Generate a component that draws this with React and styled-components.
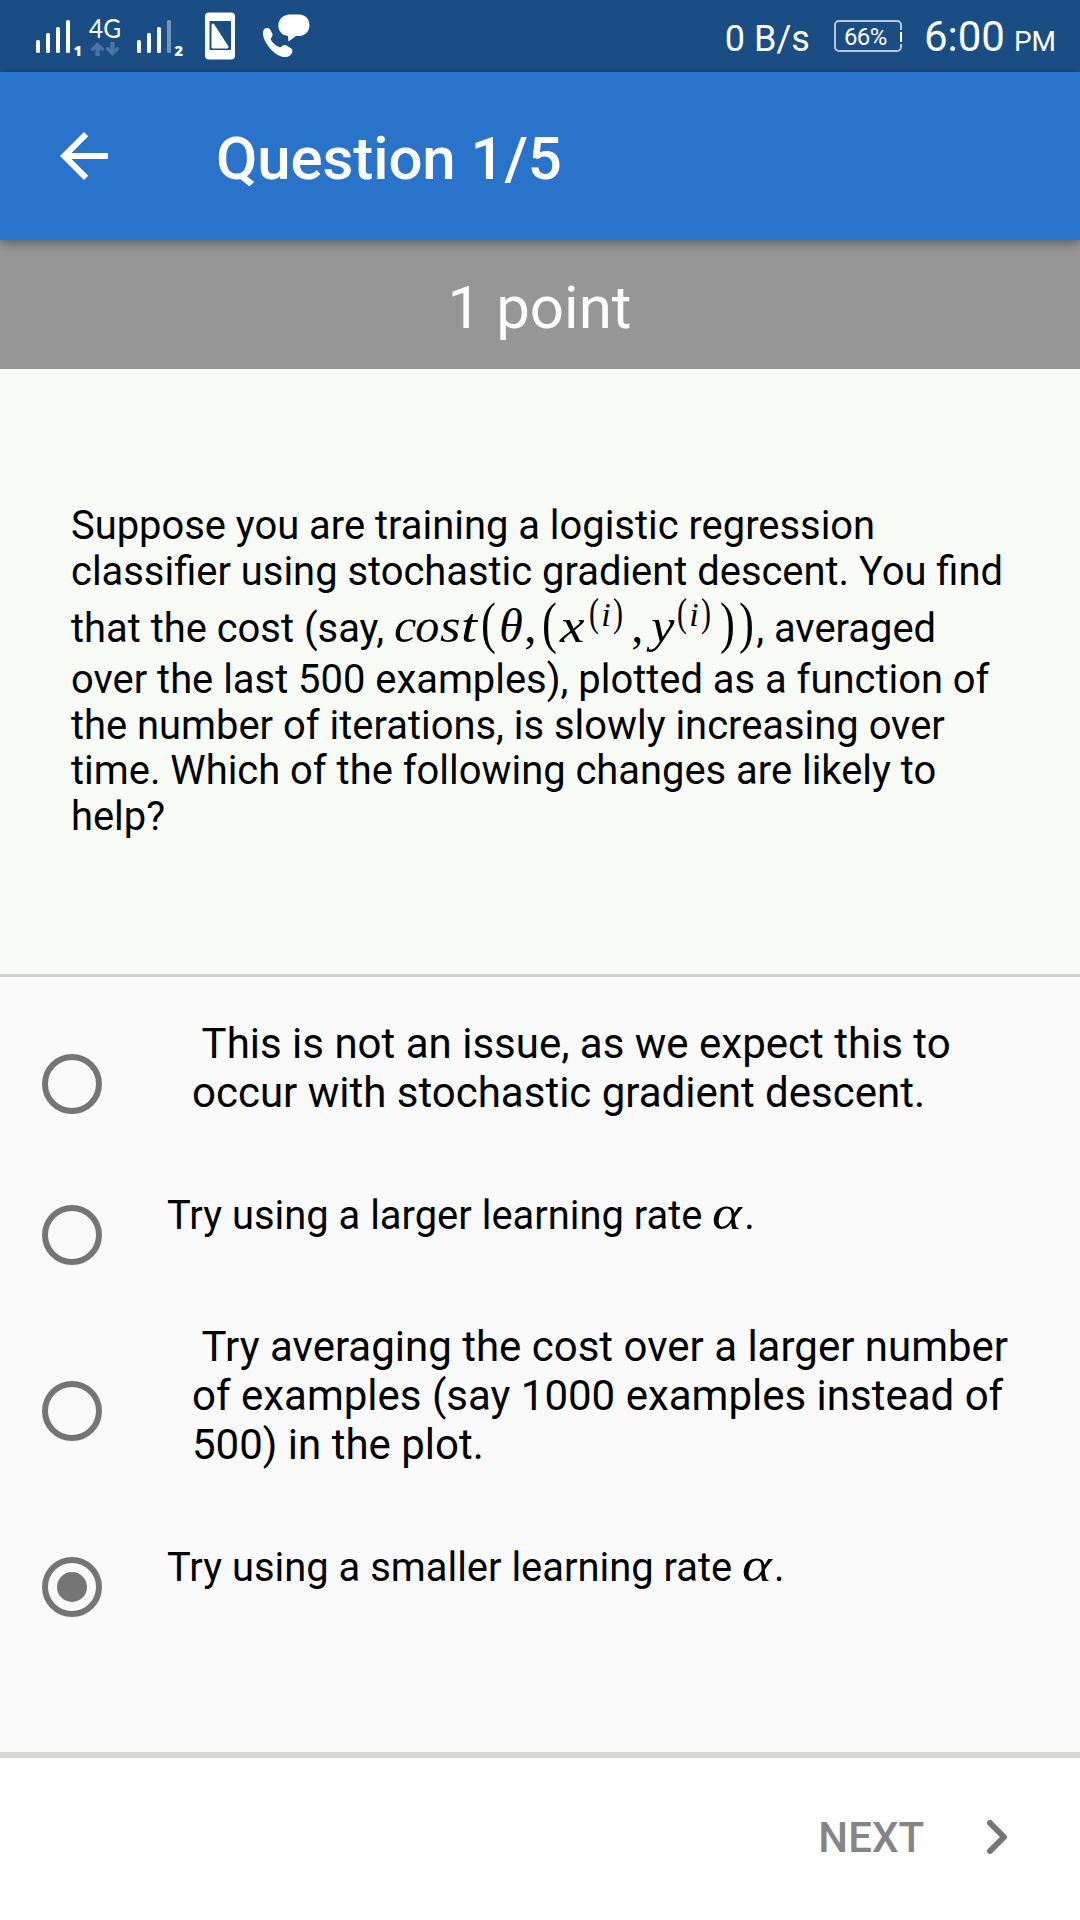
import React from "react";
import styled, { createGlobalStyle } from "styled-components";

const GlobalStyle = createGlobalStyle`
  * { box-sizing: border-box; }
  body { margin: 0; background: #fafafa; font-family: Roboto, "Noto Sans", sans-serif; }
`;

const Screen = styled.div`
  width: 1080px;
  height: 1920px;
  display: flex;
  flex-direction: column;
  overflow: hidden;
  background: #fafafa;
  color: #000;
`;

const StatusBar = styled.header`
  height: 72px;
  flex: none;
  display: flex;
  justify-content: space-between;
  padding: 0 24px 0 30px;
  background: #1b4d85;
  color: #fff;
`;

const StatusIcons = styled.svg`
  width: 290px;
  height: 72px;
  display: block;
`;

const StatusInfo = styled.div`
  display: flex;
  align-items: baseline;
  white-space: nowrap;
  line-height: 74px;
`;

const Speed = styled.span`
  font-size: 36px;
  margin-right: 24px;
`;

const Battery = styled.span`
  position: relative;
  align-self: flex-start;
  width: 68px;
  height: 32px;
  margin: 20px 22px 0 0;
  border: 2px solid #b5c6da;
  border-radius: 5px;
  font-size: 24px;
  line-height: 30px;
  padding-left: 8px;
  letter-spacing: -0.6px;

  &::after {
    content: "";
    position: absolute;
    right: -2px;
    top: 10px;
    width: 2px;
    height: 10px;
    background: #fff;
    box-shadow: 0 -2px 0 #1b4d85, 0 2px 0 #1b4d85;
  }
`;

const Clock = styled.span`
  font-size: 42px;
`;

const Meridiem = styled.span`
  font-size: 28px;
  margin-left: 9px;
`;

const AppBar = styled.div`
  position: relative;
  z-index: 1;
  height: 168px;
  flex: none;
  display: flex;
  align-items: center;
  padding-left: 48px;
  background: #2a73cb;
  color: #fff;
  box-shadow: 0 3px 10px rgba(0, 0, 0, 0.38);
`;

const BackIcon = styled.svg`
  width: 72px;
  height: 72px;
  fill: #fff;
`;

const Title = styled.h1`
  margin: 5px 0 0 96px;
  font-size: 60px;
  font-weight: 500;
  line-height: 70px;
  letter-spacing: -0.1px;
`;

const Points = styled.div`
  height: 129px;
  flex: none;
  padding-right: 1px;
  background: #969696;
  color: #fff;
  text-align: center;
  font-size: 60px;
  line-height: 135px;
`;

const Question = styled.section`
  height: 608px;
  flex: none;
  padding: 134px 0 0 71px;
  background: #f9fbf6;
  border-bottom: 3px solid #d0d4d1;
  font-size: 39.9px;
`;

const Line = styled.div`
  height: ${(p) => (p.$math ? 62.6 : 45.7)}px;
  padding-top: ${(p) => (p.$math ? 7 : 0)}px;
  line-height: 45.7px;
  white-space: nowrap;
`;

const Formula = styled.span`
  display: inline-flex;
  align-items: baseline;
  height: 45px;
  margin: 0 2px 0 10px;
  font-family: "Liberation Serif", serif;
`;

const Glyph = styled.span`
  flex: none;
  width: ${(p) => p.$w}px;
  font-size: ${(p) => p.$size || 48}px;
  font-style: ${(p) => (p.$upright ? "normal" : "italic")};
  line-height: 45.7px;
  transform: scaleX(${(p) => p.$stretch || 1});
  transform-origin: left;
`;

const Sup = styled(Glyph)`
  position: relative;
  top: -16px;
`;

const Answers = styled.section`
  height: 775px;
  flex: none;
  padding-top: 32px;
`;

const Option = styled.label`
  display: flex;
  height: ${(p) => p.$height}px;
  padding-left: 42px;
`;

const Radio = styled.span`
  flex: none;
  display: grid;
  place-items: center;
  width: 60px;
  height: 60px;
  margin-top: ${(p) => p.$top}px;
  border: 6px solid #757575;
  border-radius: 50%;
`;

const Dot = styled.span`
  width: 30px;
  height: 30px;
  border-radius: 50%;
  background: #757575;
`;

const OptionText = styled.span`
  margin: ${(p) => p.$top}px 0 0 ${(p) => (p.$rich ? 65 : 90)}px;
  font-size: ${(p) => (p.$rich ? 39.9 : 42)}px;
  line-height: 49px;
  white-space: pre;
`;

const Alpha = styled.span`
  display: inline-block;
  width: 32px;
  font-family: "Liberation Serif", serif;
  font-style: italic;
  font-size: 48px;
  line-height: 40px;
  transform: scaleX(1.18);
  transform-origin: left;
`;

const Footer = styled.footer`
  flex: 1;
  display: flex;
  justify-content: flex-end;
  align-items: center;
  padding: 0 72px 4px 0;
  border-top: 6px solid #d6d7d4;
  background: #fff;
`;

const NextButton = styled.button`
  display: flex;
  align-items: center;
  gap: 62px;
  padding: 0;
  border: 0;
  background: none;
  color: #858585;
  font: 500 42px/50px Roboto, sans-serif;
`;

const NextLabel = styled.span`
  padding-top: 2px;
`;

const Chevron = styled.svg`
  width: 22px;
  height: 36px;
  fill: none;
  stroke: #757575;
  stroke-width: 6;
  stroke-linecap: round;
  stroke-linejoin: round;
`;

function Status() {
  return (
    <StatusBar>
      <StatusIcons viewBox="30 0 290 72" fill="#fff">
        <rect x="36" y="40" width="4" height="13" rx="1.5" />
        <rect x="46" y="33" width="4" height="20" rx="1.5" />
        <rect x="56" y="27" width="4" height="26" rx="1.5" />
        <rect x="66" y="20" width="4" height="33" rx="1.5" />
        <text x="73.500" y="56" fontSize="14.500" fontWeight="800" fontFamily="Open Sans">1</text>
        <text x="89" y="38" fontSize="27.500" fontFamily="Lato" textLength="32" lengthAdjust="spacingAndGlyphs">4G</text>
        <g fill="#4a74a3">
          <path d="M97.500 42l7 7-2 2.500-2.800-2.500v7h-4.400v-7l-2.800 2.500-2-2.500z" />
          <path d="M112.500 56l7-7-2-2.500-2.800 2.500v-7h-4.400v7l-2.800-2.500-2 2.500z" />
        </g>
        <rect x="137" y="40" width="4" height="13" rx="1.5" />
        <rect x="147" y="33" width="4" height="20" rx="1.5" />
        <rect x="157" y="27" width="4" height="26" rx="1.5" />
        <rect x="167" y="20" width="4" height="33" rx="1.5" fill="#7695ba" />
        <text x="174.500" y="56" fontSize="14.500" fontWeight="800" fontFamily="Open Sans">2</text>
        <rect x="205" y="12.500" width="30" height="47" rx="4" />
        <path fill="#1b4d85" d="M209.500 21h21.500v29h-21.500z" />
        <path stroke="#fff" strokeWidth="3" strokeLinejoin="round" d="M213 25L227 47H213z" />
        <path d="M264 29.500C266 27.500 269 27.500 270.500 30L272.500 34C273 36 271 37.500 270.700 39.500C272.500 43 276 46 280 47.500C282 46.500 283 44.500 285.500 45L290.500 48C293 49.500 293 52 291 54.500C286 60 277 56 271 49.500C266 44 260.500 34 264 29.500z" />
        <path d="M289 14.500h10c14 0 14 21.500 0 21.500h-3l-7.500 5.500-.5-5.500c-13-1-13-20.500 1-21.500z" />
      </StatusIcons>
      <StatusInfo>
        <Speed>0 B/s</Speed>
        <Battery>66%</Battery>
        <Clock>6:00</Clock>
        <Meridiem>PM</Meridiem>
      </StatusInfo>
    </StatusBar>
  );
}

function CostFormula() {
  return (
    <Formula>
      <Glyph $w={21} $stretch={1.05}>c</Glyph>
      <Glyph $w={25}>o</Glyph>
      <Glyph $w={21} $stretch={1.1}>s</Glyph>
      <Glyph $w={20} $stretch={1.2}>t</Glyph>
      <Glyph $w={18} $upright $size={56} $stretch={0.8}>(</Glyph>
      <Glyph $w={25}>θ</Glyph>
      <Glyph $w={18} $upright>,</Glyph>
      <Glyph $w={18} $upright $size={56} $stretch={0.8}>(</Glyph>
      <Glyph $w={29} $stretch={1.15}>x</Glyph>
      <Sup $w={12} $size={40} $upright $stretch={0.75}>(</Sup>
      <Sup $w={12} $size={34}>i</Sup>
      <Sup $w={18} $size={40} $upright $stretch={0.75}>)</Sup>
      <Glyph $w={20} $upright>,</Glyph>
      <Glyph $w={26} $stretch={1.1}>y</Glyph>
      <Sup $w={12} $size={40} $upright $stretch={0.75}>(</Sup>
      <Sup $w={12} $size={34}>i</Sup>
      <Sup $w={19} $size={40} $upright $stretch={0.75}>)</Sup>
      <Glyph $w={19} $upright $size={56} $stretch={0.8}>)</Glyph>
      <Glyph $w={15} $upright $size={56} $stretch={0.8}>)</Glyph>
    </Formula>
  );
}

export default function App() {
  return (
    <Screen>
      <GlobalStyle />
      <Status />
      <AppBar>
        <BackIcon viewBox="0 0 24 24">
          <path d="M20 11H7.830l5.590-5.590L12 4l-8 8 8 8 1.410-1.410L7.830 13H20v-2z" />
        </BackIcon>
        <Title>Question 1/5</Title>
      </AppBar>
      <Points>1 point</Points>
      <Question>
        <Line>Suppose you are training a logistic regression</Line>
        <Line>classifier using stochastic gradient descent. You find</Line>
        <Line $math>that the cost (say,<CostFormula />, averaged</Line>
        <Line>over the last 500 examples), plotted as a function of</Line>
        <Line>the number of iterations, is slowly increasing over</Line>
        <Line>time. Which of the following changes are likely to</Line>
        <Line>help?</Line>
      </Question>
      <Answers>
        <Option $height={151}>
          <Radio $top={45} />
          <OptionText $top={10}>{" This is not an issue, as we expect this to\noccur with stochastic gradient descent."}</OptionText>
        </Option>
        <Option $height={151}>
          <Radio $top={45} />
          <OptionText $rich $top={31}>Try using a larger learning rate <Alpha>α</Alpha>.</OptionText>
        </Option>
        <Option $height={201}>
          <Radio $top={70} />
          <OptionText $top={11}>{" Try averaging the cost over a larger number\nof examples (say 1000 examples instead of\n500) in the plot."}</OptionText>
        </Option>
        <Option $height={151}>
          <Radio $top={45}><Dot /></Radio>
          <OptionText $rich $top={31}>Try using a smaller learning rate <Alpha>α</Alpha>.</OptionText>
        </Option>
      </Answers>
      <Footer>
        <NextButton>
          <NextLabel>NEXT</NextLabel>
          <Chevron viewBox="0 0 22 36"><path d="M4 4l14 14L4 32" /></Chevron>
        </NextButton>
      </Footer>
    </Screen>
  );
}
